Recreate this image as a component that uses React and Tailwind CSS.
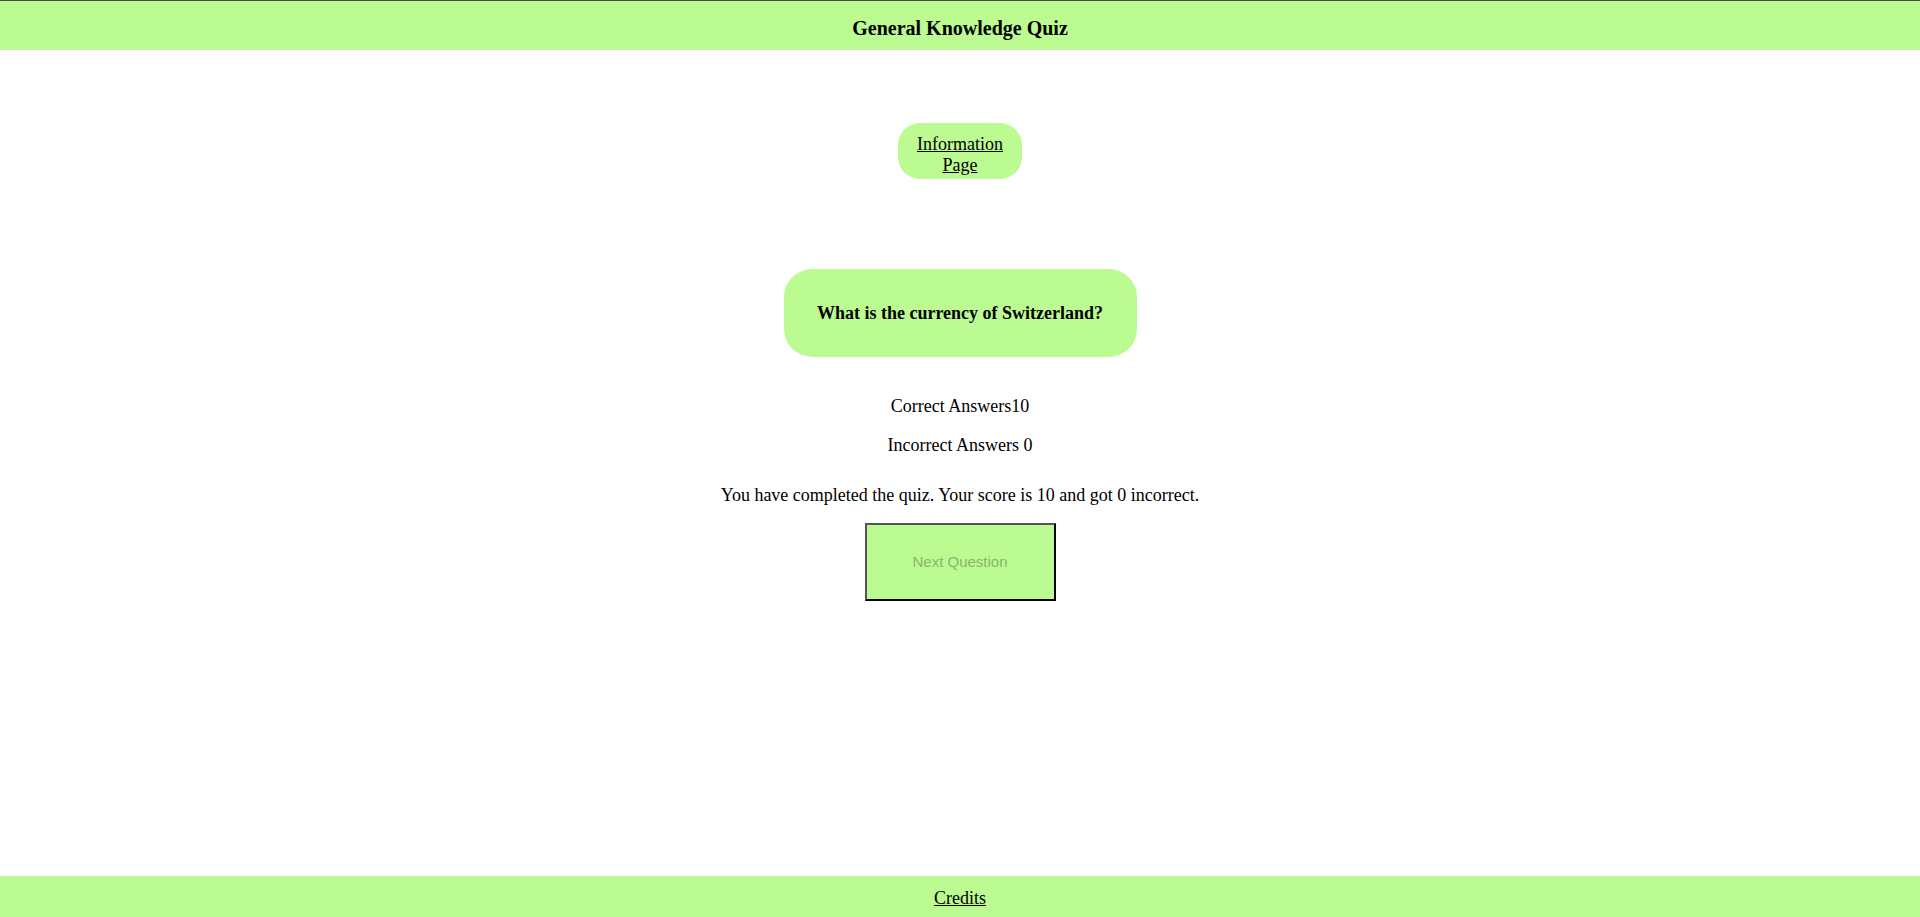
export default function App() {
  const correct = 10;
  const incorrect = 0;

  return (
    <div className="min-h-screen flex flex-col bg-white text-black font-['Liberation_Serif','Times_New_Roman',serif] border-t border-[#4a4a4a]">
      <header className="h-[49px] bg-[#bbfb92] flex items-center justify-center">
        <h1 className="text-[20px] font-bold leading-none pt-[4px]">General Knowledge Quiz</h1>
      </header>

      <main className="flex-1 flex flex-col items-center">
        <a
          href="#"
          className="mt-[73px] w-[124px] h-[56px] pt-[8px] rounded-[22px] bg-[#bbfb92] flex items-center justify-center text-center text-[18px] leading-[21px] underline"
        >
          Information
          <br />
          Page
        </a>

        <div className="mt-[90px] w-[353px] h-[88px] rounded-[28px] bg-[#bbfb92] flex items-center justify-center">
          <h3 className="text-[18px] font-bold pt-[1px]">What is the currency of Switzerland?</h3>
        </div>

        <p className="mt-[39px] text-[18px] leading-[20px]">Correct Answers{correct}</p>
        <p className="mt-[19px] text-[18px] leading-[20px]">Incorrect Answers {incorrect}</p>
        <p className="mt-[30px] text-[18px] leading-[20px]">
          You have completed the quiz. Your score is {correct} and got {incorrect} incorrect.
        </p>

        <button
          disabled
          className="mt-[18px] w-[191px] h-[78px] bg-[#bbfb92] border-2 border-t-[#555] border-l-[#555] border-b-black border-r-black font-['Liberation_Sans',Arial,sans-serif] text-[15px] text-[#8ab56e]"
        >
          Next Question
        </button>
      </main>

      <footer className="h-[41px] bg-[#bbfb92] flex items-center justify-center">
        <a href="#" className="text-[18px] underline pt-[4px]">Credits</a>
      </footer>
    </div>
  );
}
